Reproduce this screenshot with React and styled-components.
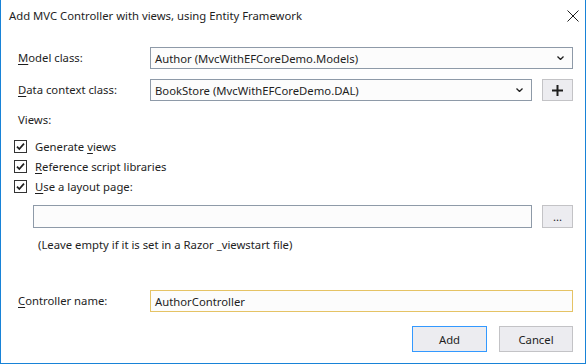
import React from "react";
import styled, { createGlobalStyle } from "styled-components";

const Global = createGlobalStyle`
  html, body { margin: 0; padding: 0; background: #fff; }
  body {
    font-family: "Noto Sans", "Open Sans", sans-serif;
    font-size: 11.3px;
    color: #1e1e1e;
  }
`;

const Dialog = styled.div`
  width: 586px;
  height: 364px;
  box-sizing: border-box;
  border: 1px solid #1883d7;
  border-top: none;
  background: #fff;
  display: flex;
  flex-direction: column;
`;

const TitleBar = styled.div`
  height: 32px;
  display: flex;
  align-items: center;
  padding: 0 4px 0 8px;
  flex-shrink: 0;
`;

const Title = styled.div`
  flex: 1;
  line-height: 16px;
`;

const Body = styled.div`
  padding: 15px 12px 0 17px;
  display: flex;
  flex-direction: column;
`;

const FormRow = styled.div`
  display: grid;
  grid-template-columns: 122px 1fr ${(p) => (p.$extra ? "31px" : "")};
  column-gap: 10px;
  align-items: center;
  height: 22px;
  margin-top: ${(p) => p.$top || 0}px;
`;

const Label = styled.label`
  line-height: 16px;
  white-space: nowrap;
  u { text-decoration: underline; text-underline-offset: 2px; }
`;

const Combo = styled.div`
  height: 22px;
  box-sizing: border-box;
  border: 1px solid #8e9aa8;
  background: #fcfcfc;
  display: flex;
  align-items: center;
  padding: 0 8px 0 4px;
  span { flex: 1; }
`;

const SquareButton = styled.button`
  box-sizing: border-box;
  height: ${(p) => p.$h || 22}px;
  width: 31px;
  padding: 0;
  border: 1px solid #c3c3c6;
  background: #ececf0;
  display: flex;
  align-items: center;
  justify-content: center;
  font: inherit;
  color: #1e1e1e;
`;

const SectionLabel = styled.div`
  line-height: 16px;
  margin-top: ${(p) => p.$top || 0}px;
`;

const CheckList = styled.div`
  margin-top: 8px;
  display: flex;
  flex-direction: column;
`;

const CheckRow = styled.div`
  height: 20px;
  display: flex;
  align-items: center;
  gap: 8px;
  margin-left: -4px;
  u { text-decoration: underline; text-underline-offset: 2px; }
`;

const Box = styled.span`
  width: 13px;
  height: 13px;
  box-sizing: border-box;
  border: 1px solid #333;
  background: #fff;
  display: flex;
  align-items: center;
  justify-content: center;
`;

const LayoutRow = styled.div`
  display: flex;
  gap: 10px;
  margin: 9px 0 0 15px;
  height: 23px;
`;

const TextBox = styled.div`
  flex: 1;
  box-sizing: border-box;
  height: ${(p) => p.$h || 22}px;
  border: 1px solid ${(p) => (p.$focus ? "#e5c365" : "#8e9aa8")};
  background: #fcfcfc;
  display: flex;
  align-items: center;
  padding-left: 4px;
`;

const Hint = styled.div`
  margin: 9px 0 0 20px;
  line-height: 16px;
`;

const Footer = styled.div`
  display: flex;
  justify-content: flex-end;
  gap: 12px;
  padding: 14px 12px 0 0;
`;

const DialogButton = styled.button`
  box-sizing: border-box;
  height: 26px;
  width: ${(p) => p.$w}px;
  border: 1px solid ${(p) => (p.$primary ? "#3399ff" : "#c3c3c6")};
  background: #ececf0;
  font: inherit;
  color: #1e1e1e;
  padding: 0;
`;

const Chevron = () => (
  <svg width="7" height="4" viewBox="0 0 7 4">
    <path d="M0.5 0.5 L3.5 3.5 L6.5 0.5" fill="none" stroke="#1e1e1e" strokeWidth="1.3" />
  </svg>
);

const Check = () => (
  <svg width="9" height="9" viewBox="0 0 9 9">
    <path d="M1 4.6 L3.3 7 L8 1.6" fill="none" stroke="#1e1e1e" strokeWidth="1.7" />
  </svg>
);

const CheckItem = ({ children }) => (
  <CheckRow>
    <Box>
      <Check />
    </Box>
    <span>{children}</span>
  </CheckRow>
);

export default function App() {
  return (
    <>
      <Global />
      <Dialog>
        <TitleBar>
          <Title>Add MVC Controller with views, using Entity Framework</Title>
          <svg width="12" height="12" viewBox="0 0 12 12" style={{ marginRight: 2 }}>
            <path d="M0.5 0.5 L11.5 11.5 M11.5 0.5 L0.5 11.5" stroke="#1e1e1e" strokeWidth="1" />
          </svg>
        </TitleBar>
        <Body>
          <FormRow>
            <Label><u>M</u>odel class:</Label>
            <Combo>
              <span>Author (MvcWithEFCoreDemo.Models)</span>
              <Chevron />
            </Combo>
          </FormRow>
          <FormRow $top={10} $extra>
            <Label><u>D</u>ata context class:</Label>
            <Combo>
              <span>BookStore (MvcWithEFCoreDemo.DAL)</span>
              <Chevron />
            </Combo>
            <SquareButton>
              <svg width="11" height="11" viewBox="0 0 11 11">
                <path d="M5.5 0 V11 M0 5.5 H11" stroke="#1e1e1e" strokeWidth="2" />
              </svg>
            </SquareButton>
          </FormRow>
          <SectionLabel $top={11}>Views:</SectionLabel>
          <CheckList>
            <CheckItem>Generate <u>v</u>iews</CheckItem>
            <CheckItem><u>R</u>eference script libraries</CheckItem>
            <CheckItem><u>U</u>se a layout page:</CheckItem>
          </CheckList>
          <LayoutRow>
            <TextBox $h={23} />
            <SquareButton $h={23}>...</SquareButton>
          </LayoutRow>
          <Hint>(Leave empty if it is set in a Razor _viewstart file)</Hint>
          <FormRow $top={37}>
            <Label><u>C</u>ontroller name:</Label>
            <TextBox $focus>AuthorController</TextBox>
          </FormRow>
        </Body>
        <Footer>
          <DialogButton $primary $w={75}>Add</DialogButton>
          <DialogButton $w={74}>Cancel</DialogButton>
        </Footer>
      </Dialog>
    </>
  );
}
